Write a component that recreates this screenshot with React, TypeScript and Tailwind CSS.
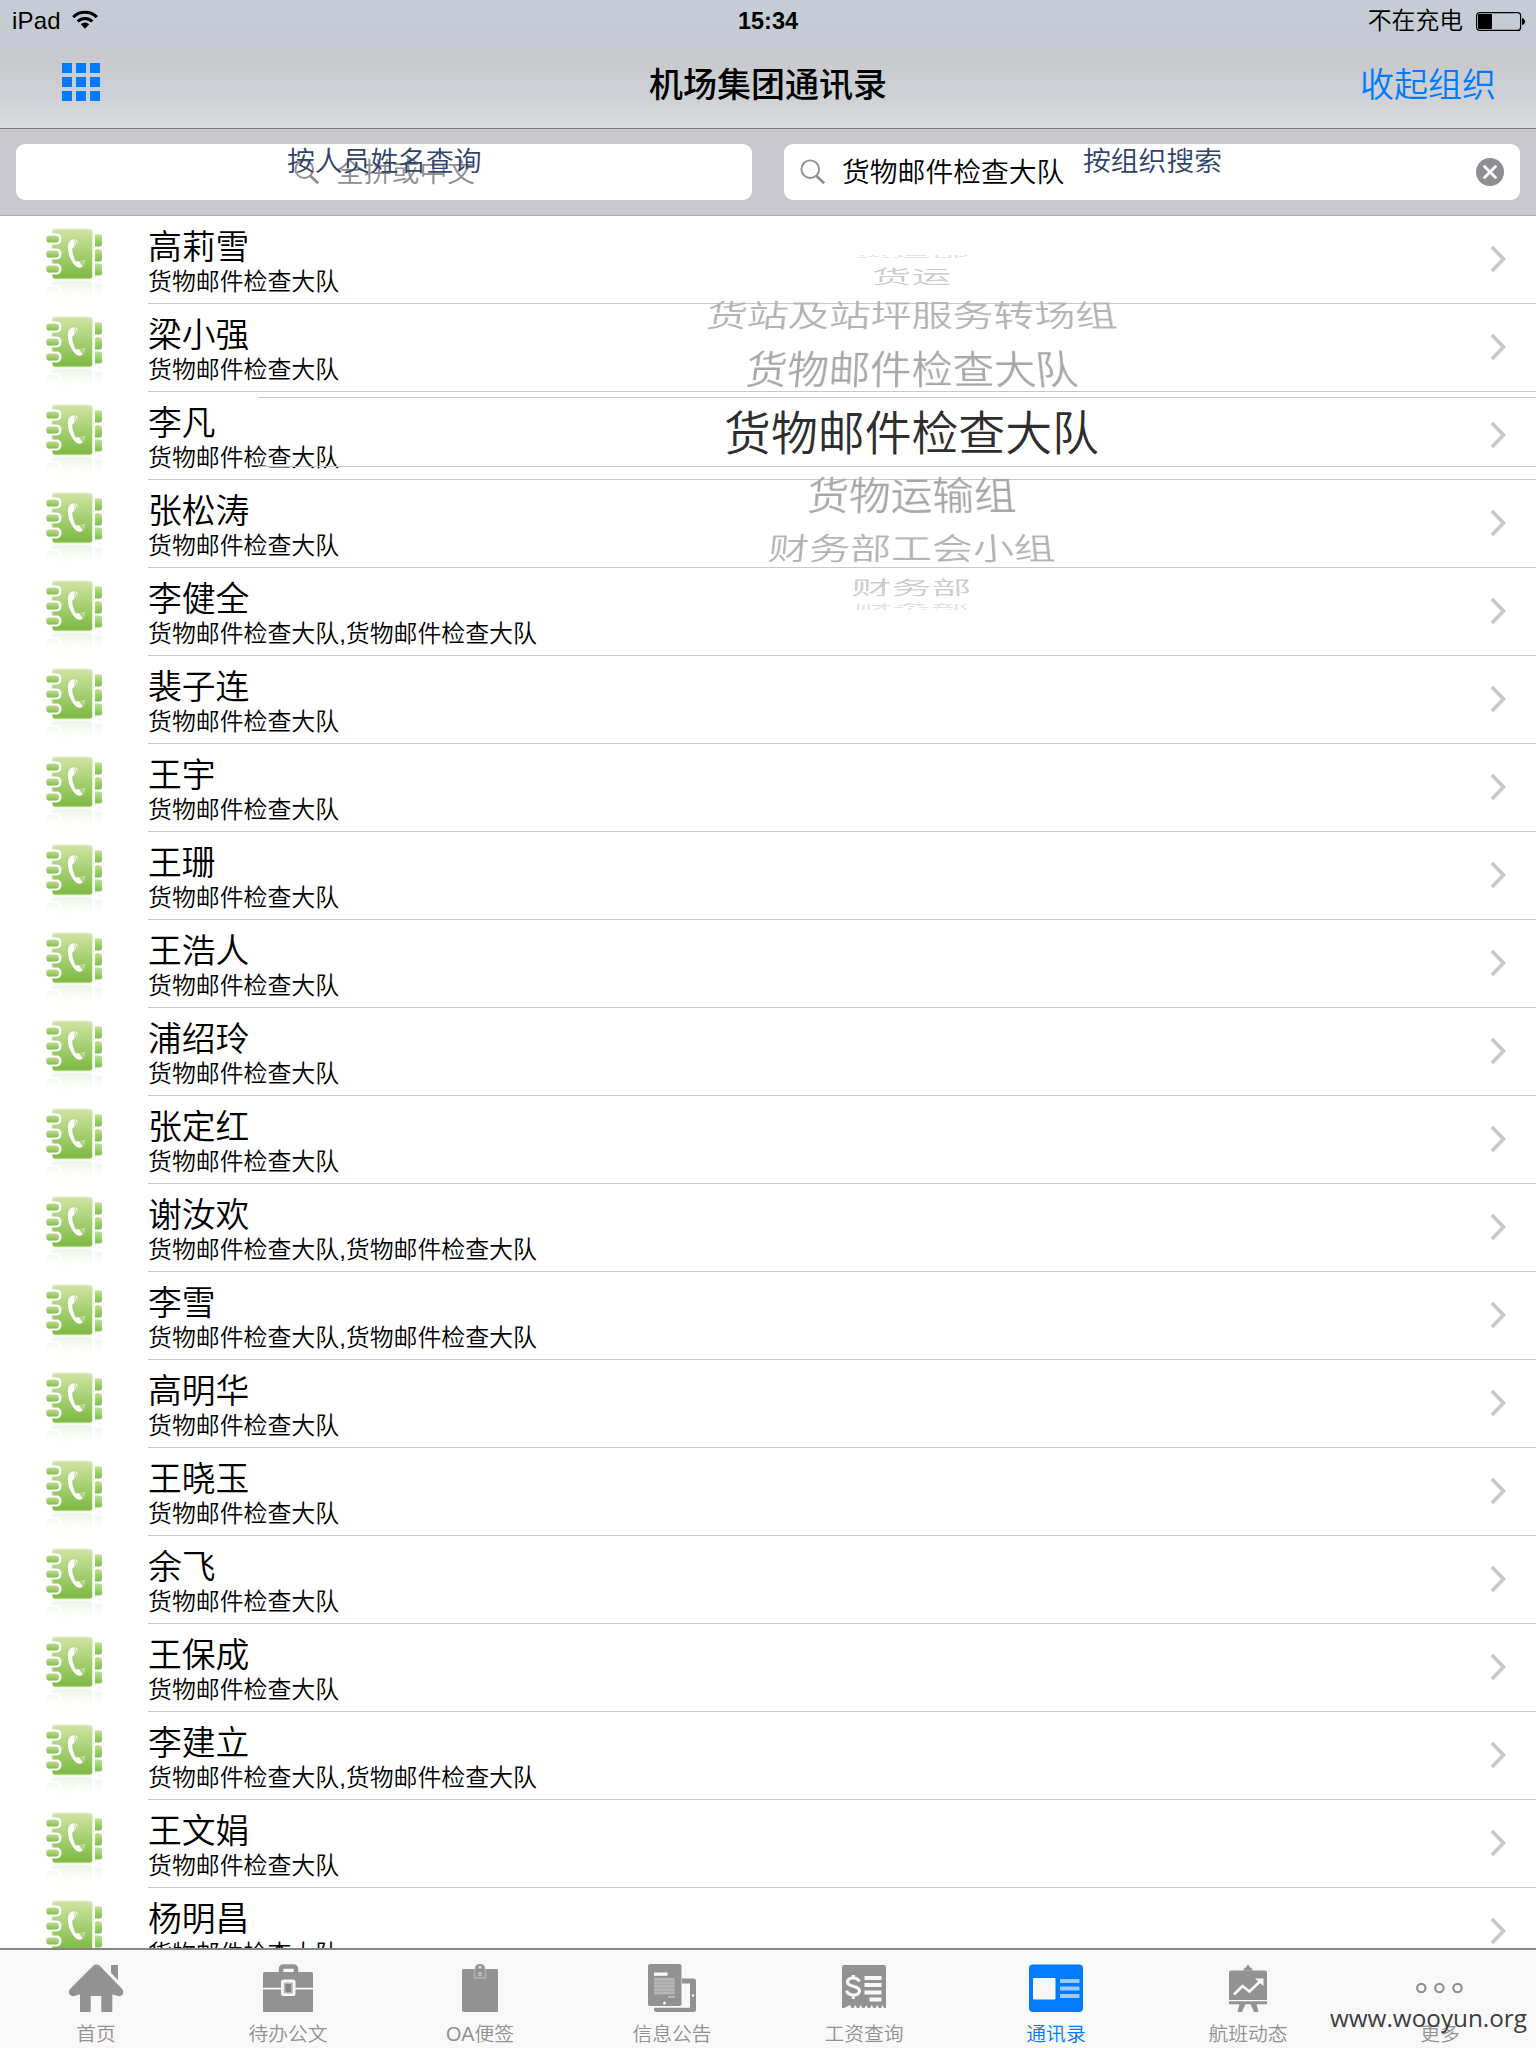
import React from "react";

const D = "货物邮件检查大队";

const contacts: { name: string; dept: string }[] = [
  { name: "高莉雪", dept: D },
  { name: "梁小强", dept: D },
  { name: "李凡", dept: D },
  { name: "张松涛", dept: D },
  { name: "李健全", dept: `${D},${D}` },
  { name: "裴子连", dept: D },
  { name: "王宇", dept: D },
  { name: "王珊", dept: D },
  { name: "王浩人", dept: D },
  { name: "浦绍玲", dept: D },
  { name: "张定红", dept: D },
  { name: "谢汝欢", dept: `${D},${D}` },
  { name: "李雪", dept: `${D},${D}` },
  { name: "高明华", dept: D },
  { name: "王晓玉", dept: D },
  { name: "余飞", dept: D },
  { name: "王保成", dept: D },
  { name: "李建立", dept: `${D},${D}` },
  { name: "王文娟", dept: D },
  { name: "杨明昌", dept: D },
];

function BookShape() {
  return (
    <>
      <rect x="6" y="1" width="40.5" height="50" rx="3" fill="url(#book)" stroke="#e3f0cf" strokeWidth="1" />
      {[6.5, 21.5, 35.5].map((y) => (
        <path key={y} d={`M49 ${y}h4.5a2.5 2.5 0 0 1 2.500 2.500v7a2.500 2.500 0 0 1-2.500 2.500h-4.500z`} fill="url(#tab)" />
      ))}
      {[11, 26, 41].map((y) => (
        <g key={y}>
          <rect x="-1" y={y - 5.5} width="16.500" height="11" rx="5" fill="#fff" />
          <rect x="0.300" y={y - 3.500} width="12.500" height="7" rx="2.800" fill="url(#tab)" />
        </g>
      ))}
      <path
        d="M26 11.500c-4 2-5 7-3.500 13 1.500 6.500 4.500 12 8.500 14.500 2 1.200 4.500.8 6-.800l-4-5.200-3 .600c-2.600-4-4-9-3.800-13.600l2.300-1.200-.600-7.200z"
        fill="#fff"
      />
      <path d="M28.500 11l1 6M30.700 12l.500 3.500M35.200 32.500l3.500 4M37.500 32l1.500 2" stroke="#fff" strokeWidth="1" opacity=".8" />
    </>
  );
}

function ContactIcon() {
  return (
    <svg className="ml-[46px] mt-3 h-[72px] w-[57px] shrink-0" viewBox="0 0 57 72">
      <g>
        <BookShape />
      </g>
      <g transform="translate(0 103.500) scale(1 -1)" opacity=".13">
        <BookShape />
      </g>
      <rect x="0" y="51.800" width="57" height="21" fill="url(#fade)" />
    </svg>
  );
}

function Chevron() {
  return (
    <svg className="absolute right-[29px] top-[29px] h-[28px] w-[17px]" viewBox="0 0 17 28" fill="none">
      <path d="M2 2l11.500 12L2 26" stroke="#c7c7cc" strokeWidth="3.600" />
    </svg>
  );
}

function SearchIcon({ className }: { className: string }) {
  return (
    <svg className={className} viewBox="0 0 28 28" fill="none" stroke="#8e8e93">
      <circle cx="11" cy="11" r="9.500" strokeWidth="2" />
      <path d="M17.500 18l8.500 8" strokeWidth="3" />
    </svg>
  );
}

const pickerRows = [
  { text: "货运部", y: 254, sx: 0.82, sy: 0.2, color: "#e2e2e2" },
  { text: "货运", y: 277, sx: 0.845, sy: 0.41, color: "#cbcbcb" },
  { text: "货站及站坪服务转场组", y: 316, sx: 0.872, sy: 0.65, color: "#b4b4b4" },
  { text: D, y: 370, sx: 0.88, sy: 0.83, color: "#a8a8a8" },
  { text: D, y: 433.5, sx: 0.997, sy: 1, color: "#2e2e2e" },
  { text: "货物运输组", y: 496, sx: 0.887, sy: 0.83, color: "#a8a8a8" },
  { text: "财务部工会小组", y: 549, sx: 0.87, sy: 0.65, color: "#b4b4b4" },
  { text: "财务部", y: 587.5, sx: 0.85, sy: 0.41, color: "#cbcbcb" },
  { text: "财务部", y: 608, sx: 0.82, sy: 0.2, color: "#e2e2e2" },
];

/* Organisation wheel floating above the contact list. */
function Picker() {
  return (
    <div className="pointer-events-none absolute left-[258px] top-[39px] h-[355px] w-[1278px] overflow-hidden">
      <div className="absolute inset-x-0 top-[142px] h-[70px] border-y border-[#c8c8c8]" />
      {pickerRows.map((r, i) => (
        <div
          key={i}
          className="absolute left-0 h-[60px] w-[1307px] whitespace-nowrap text-center text-[47px] leading-[60px]"
          style={{
            top: r.y - 255 - 30,
            color: r.color,
            transform:
              r.sy === 1
                ? `scaleX(${r.sx})`
                : `perspective(700px) rotateX(30deg) scale(${r.sx}, ${r.sy / 0.866})`,
          }}
        >
          {r.text}
        </div>
      ))}
    </div>
  );
}

const G = "#929292";
const BG = "#f8f8f8";

const tabs: { label: string; active?: boolean; w: number; icon: React.ReactNode }[] = [
  {
    label: "首页",
    w: 54,
    icon: (
      <path
        fill={G}
        d="M27.500 0.500c-1.500 0-2.500.500-3.500 1.500L1.500 24.500c-2 2-2 4-.800 6 1.300 2 4 2 6 1l4.300-1V48h10.700V32h10.600v16h11V30.500l4.200 1c2 1 4.800 1 6-1s1-4-.900-6L31 2c-1-1-2-1.500-3.500-1.500zM42 1h7v15l-7-7z"
      />
    ),
  },
  {
    label: "待办公文",
    w: 50,
    icon: (
      <>
        <path fill="none" stroke={G} strokeWidth="4.500" d="M18 10V5.500q0-3 3-3h9q3 0 3 3V10" />
        <path fill={G} d="M1.500 8h47q1.500 0 1.500 1.500V48H0V9.500Q0 8 1.500 8z" />
        <path stroke={BG} strokeWidth="1.800" d="M0 24.700h50" />
        <rect x="18" y="15.500" width="14.500" height="16.500" rx="2.500" fill={BG} />
        <rect x="20.800" y="18.500" width="9" height="11" rx="1" fill="#b4b4b4" />
        <rect x="22.500" y="20" width="5.500" height="8" fill="#858585" />
      </>
    ),
  },
  {
    label: "OA便签",
    w: 36,
    icon: (
      <>
        <rect y="5" width="36.500" height="43" rx="1.800" fill={G} />
        <path fill="#aaa" d="M11.500 5.500h13V15h-13z" />
        <path fill={G} stroke="#b4b4b4" strokeWidth=".8" d="M13 13.500V5.500q0-5.500 5-5.500t5 5.500v8z" />
        <path fill="#d8d8d8" d="M16.500 2h3v2.500h-3z" />
        <path fill="#b8b8b8" d="M16 8h4v4h-4z" />
      </>
    ),
  },
  {
    label: "信息公告",
    w: 48,
    icon: (
      <>
        <path fill={G} d="M34 14.500h11.500q2.500 0 2.500 2.500v28.500q0 2.500-2.500 2.500H8.500Q6 48 6 45.500V43.700h36V19.500h-8z" />
        <circle cx="45" cy="31.500" r="1.200" fill={BG} />
        <rect width="33.500" height="42" rx="2" fill={G} />
        <rect x="6" y="8.500" width="13.500" height="3.300" fill={BG} />
        <rect x="6" y="14" width="20.500" height="16.500" fill="#b5b5b5" />
        <path stroke="#a2a2a2" strokeWidth=".8" d="M6 17h20.500M6 20.500h20.500M6 24h20.500M6 27.500h20.500" />
        <path stroke="#c4c4c4" strokeWidth="1.500" d="M20 33h7" />
        <circle cx="16.500" cy="39" r="1.500" fill={BG} />
      </>
    ),
  },
  {
    label: "工资查询",
    w: 44,
    icon: (
      <>
        <path
          fill={G}
          d="M2 1h40q2 0 2 2v41h-2l-1.500-3-1.500 3h-2l-1.800-3-1.700 3h-2l-1.800-3-1.700 3h-2l-1.800-3-1.700 3h-2l-1.800-3-1.700 3h-2l-1.800-3-1.700 3h-2l-1.500-3L2 44H0V3q0-2 2-2z"
        />
        <path
          fill="none"
          stroke={BG}
          strokeWidth="3.200"
          d="M17.300 17.500c-1-2.600-3.500-3.600-6.500-3.500-3.500.200-5.300 2-5.300 4.200 0 5.300 12 2.800 12 8.600 0 2.500-2.500 4.200-6 4.200-3.500 0-6-1.500-7-4.200M11.300 11v3M11.300 31v4"
        />
        <path stroke={BG} strokeWidth="4" d="M22.500 14h17M22.500 21h17M22.500 28.500h17M27.500 35.500h12" />
      </>
    ),
  },
  {
    label: "通讯录",
    active: true,
    w: 54,
    icon: (
      <>
        <rect y=".5" width="54" height="47.500" rx="4" fill="#007aff" />
        <rect x="4" y="14" width="22.500" height="21.500" rx="1" fill={BG} />
        <path stroke="#9bcbff" strokeWidth="4" d="M31 17h19.500M31 24.500h19.500M31 32h19.500" />
      </>
    ),
  },
  {
    label: "航班动态",
    w: 38,
    icon: (
      <>
        <path fill={G} d="M14 6.500q1-3 3.500-3.500Q17.500.800 19 .800T20.500 3q2.500.500 3.500 3.500z" />
        <path fill={G} d="M2 6.500h34q2 0 2 2V36H0V8.500q0-2 2-2zM0 37.300h38v3H0z" />
        <path fill={G} d="M10.500 40h6L13 48H8.500zM21.500 40h6l2 8H25z" />
        <path fill="none" stroke={BG} strokeWidth="2.700" d="M5 30.500l8.500-8.500 7 5.500L31 17.500" />
        <path fill={BG} d="M26 14.500h8.500V22z" />
      </>
    ),
  },
  {
    label: "更多",
    w: 48,
    icon: (
      <g fill="none" stroke={G} strokeWidth="2.200">
        <circle cx="5.300" cy="24" r="4.200" />
        <circle cx="23.400" cy="24" r="4.200" />
        <circle cx="41.500" cy="24" r="4.200" />
      </g>
    ),
  },
];

export default function App() {
  return (
    <div className="relative flex h-[2048px] w-[1536px] flex-col overflow-hidden bg-white font-['Liberation_Sans','Noto_Sans_CJK_SC',sans-serif] font-[350] text-black">
      <svg className="absolute h-0 w-0">
        <defs>
          <linearGradient id="book" x1="0" y1="0" x2="0" y2="1">
            <stop offset="0" stopColor="#d0e4a4" />
            <stop offset="1" stopColor="#7aba41" />
          </linearGradient>
          <linearGradient id="tab" x1="0" y1="0" x2="0" y2="1">
            <stop offset="0" stopColor="#bfdd91" />
            <stop offset="1" stopColor="#80bf4b" />
          </linearGradient>
          <linearGradient id="fade" x1="0" y1="0" x2="0" y2="1">
            <stop offset="0" stopColor="#fff" stopOpacity="0" />
            <stop offset=".9" stopColor="#fff" />
          </linearGradient>
        </defs>
      </svg>

      <header className="flex h-[129px] shrink-0 flex-col border-b border-[#7d7d80] bg-[linear-gradient(180deg,#c5cdd6_0%,#c6c9d1_40%,#c8cacd_50%,#cdd0d5_75%,#dcdde0_100%)]">
        <div className="grid h-[42px] grid-cols-3 items-center text-[24px] leading-[42px]">
          <div className="flex items-center pl-3 font-normal tracking-[0.2px]">
            iPad
            <svg className="ml-[11px] mb-[3px] h-[19px] w-[26px]" viewBox="0 0 26 19" fill="none" stroke="#000">
              <path d="M1.200 7.200a16.500 16.500 0 0 1 23.600 0" strokeWidth="3.200" />
              <path d="M5.700 11.500a10.300 10.300 0 0 1 14.600 0" strokeWidth="3" />
              <path d="M8.800 14.300a6 6 0 0 1 8.400 0L13 18.800z" fill="#000" stroke="none" />
            </svg>
          </div>
          <div className="text-center text-[23.500px] font-bold">15:34</div>
          <div className="flex items-center justify-end pr-[10px]">
            <span className="text-[23.800px]">不在充电</span>
            <svg className="ml-[13px] h-[19px] w-[50px]" viewBox="0 0 50 19">
              <rect x=".6" y=".6" width="44" height="17.800" rx="3" fill="none" stroke="#000" strokeWidth="1.200" />
              <rect x="2" y="2" width="14" height="15" rx="1" fill="#000" />
              <path d="M46 6q3 1 3 3.500T46 13z" fill="#000" />
            </svg>
          </div>
        </div>
        <div className="grid h-[86px] grid-cols-3 items-center text-[34px] leading-[86px]">
          <div className="ml-[62px] mb-[6px] grid w-[38px] grid-cols-3 gap-1">
            {Array.from({ length: 9 }, (_, i) => (
              <span key={i} className="h-[10px] w-[10px] bg-[#007aff]" />
            ))}
          </div>
          <div className="text-center font-medium">机场集团通讯录</div>
          <div className="pr-[40px] text-right text-[#007aff]">收起组织</div>
        </div>
      </header>

      <div className="flex h-[87px] shrink-0 gap-8 border-b border-[#b0b0b4] bg-[#c9c8ce] px-4 pt-[15px] text-[27.800px]">
        <div className="relative flex h-14 flex-1 items-center rounded-[9px] bg-white">
          <SearchIcon className="ml-[278px] h-[26px] w-[26px]" />
          <span className="ml-4 mt-0.5 text-[#8e8e93]">全拼或中文</span>
          <span className="absolute left-[271px] top-[-3px] leading-[42px] text-[#2f4468]">按人员姓名查询</span>
        </div>
        <div className="relative flex h-14 flex-1 items-center rounded-[9px] bg-white">
          <SearchIcon className="ml-4 h-[26px] w-[26px]" />
          <span className="ml-[16px] mt-0.5">{D}</span>
          <span className="absolute left-[299px] top-[-3px] leading-[42px] text-[#2f4468]">按组织搜索</span>
          <svg className="ml-auto mr-4 h-7 w-7" viewBox="0 0 28 28">
            <circle cx="14" cy="14" r="14" fill="#8e8e93" />
            <path d="M8.500 8.500l11 11M19.500 8.500l-11 11" stroke="#fff" strokeWidth="2.800" strokeLinecap="round" />
          </svg>
        </div>
      </div>

      <main className="relative h-[1732px] shrink-0 overflow-hidden">
        {contacts.map((c) => (
          <div key={c.name} className="relative flex h-[88px]">
            <ContactIcon />
            <div className="ml-[45px] flex-1 border-b border-[#c8c8cb]">
              <div className="mt-[10px] h-[42px] text-[33.800px] leading-[42px]">{c.name}</div>
              <div className="h-[28px] text-[23.900px] leading-[28px]">{c.dept}</div>
            </div>
            <Chevron />
          </div>
        ))}
        <Picker />
      </main>

      <nav className="flex h-[100px] shrink-0 border-t-2 border-[#858585] bg-[#f8f8f8]">
        {tabs.map((t) => (
          <div key={t.label} className="flex w-48 flex-col items-center pt-[14px]">
            <svg className="h-12" width={t.w} height="48" viewBox={`0 0 ${t.w} 48`}>
              {t.icon}
            </svg>
            <span className={t.active ? "mt-2 text-[19.800px] leading-[28px] text-[#007aff]" : "mt-2 text-[19.800px] leading-[28px] text-[#929292]"}>
              {t.label}
            </span>
          </div>
        ))}
      </nav>
      <div className="absolute bottom-[13px] right-[9px] font-['Open_Sans',sans-serif] text-[24.300px] font-normal leading-[34px] text-[#3c3c3c]">
        www.wooyun.org
      </div>
    </div>
  );
}
